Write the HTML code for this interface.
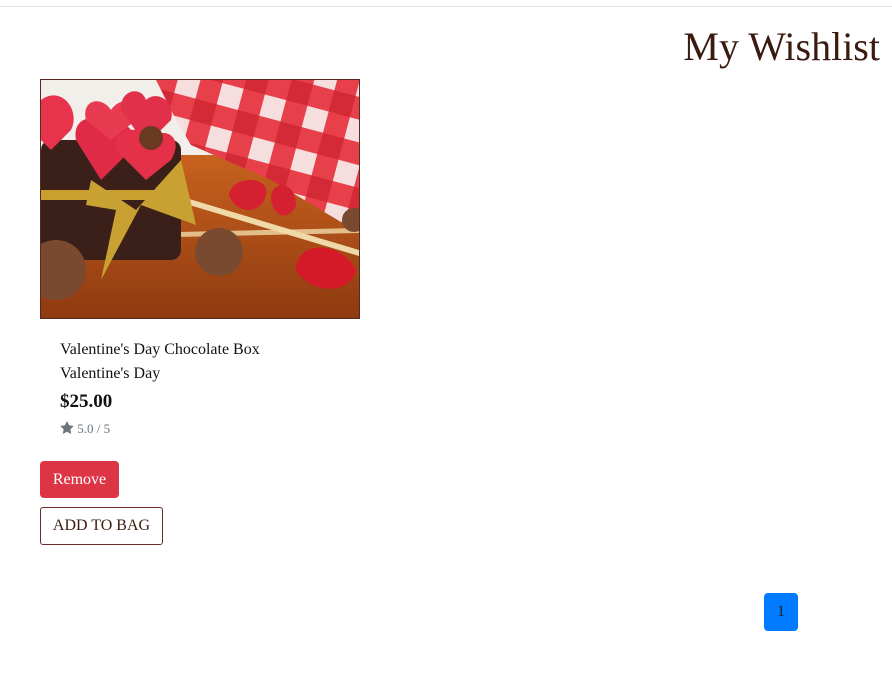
<!DOCTYPE html>
<html><head><meta charset="utf-8"><style>
body{margin:0;width:892px;height:682px;background:#fff;font-family:"Liberation Serif",serif;position:relative;overflow:hidden}
.line{position:absolute;left:0;top:6px;width:892px;height:1px;background:#e3e3e3}
h1{position:absolute;right:12px;top:24px;margin:0;font-weight:normal;font-size:40px;line-height:46px;color:#3b1a0f}
.img{position:absolute;left:40px;top:79px;width:318px;height:238px;border:1px solid #5a2a20;overflow:hidden}
.t{position:absolute;left:60px;color:#111;font-size:16px}
.btn1{position:absolute;left:40px;top:461px;width:79px;height:37px;background:#dc3545;border-radius:4px;color:#fff;font-size:16px;text-align:center;line-height:37px}
.btn2{position:absolute;left:40px;top:507px;width:121px;height:36px;border:1px solid #6b2d25;border-radius:3px;color:#3b1a0f;font-size:16px;text-align:center;line-height:36px}
.pg{position:absolute;left:764px;top:593px;width:34px;height:38px;background:#007bff;border-radius:4px;color:#222;font-size:16px;text-align:center;line-height:38px}
</style></head><body>
<div class="line"></div>
<h1>My Wishlist</h1>
<div class="img"><svg width="318" height="238" viewBox="0 0 318 238">
<defs><linearGradient id="w" x1="0" y1="0" x2="0" y2="1"><stop offset="0" stop-color="#c8621e"/><stop offset="1" stop-color="#8e3a10"/></linearGradient>
<pattern id="ck" width="44" height="44" patternUnits="userSpaceOnUse" patternTransform="rotate(15)"><rect width="44" height="44" fill="#e8404a"/><rect width="22" height="22" fill="#f6dede"/><rect x="22" y="22" width="22" height="22" fill="#d42a36"/></pattern></defs>
<rect width="318" height="238" fill="#f2eeea"/>
<rect y="75" width="318" height="163" fill="url(#w)"/>
<polygon points="135,115 318,170 318,176 135,121" fill="#f0d9a8"/>
<polygon points="0,155 318,148 318,153 0,160" fill="#f0d9a8" opacity=".8"/>
<polygon points="115,0 318,0 318,135 300,142 230,100 150,65 135,40" fill="url(#ck)"/>
<rect x="0" y="60" width="140" height="120" rx="10" fill="#3a2018"/>
<rect x="0" y="110" width="140" height="10" fill="#c9a030"/>
<path d="M0,20 C20,5 40,30 30,50 L10,70 0,60Z" fill="#e8334d"/>
<path d="M35,60 C30,35 60,30 65,55 C75,35 100,45 90,70 L60,100 Z" fill="#e02a48"/>
<path d="M45,40 C40,20 60,15 70,30 C80,15 100,20 95,40 L70,60Z" fill="#e83a50"/>
<path d="M80,30 C78,10 100,5 105,20 C115,10 135,20 130,40 L105,65Z" fill="#e0304a"/>
<path d="M75,70 C70,45 105,45 110,60 C120,45 145,55 130,80 L105,100 Z" fill="#e43048"/>
<circle cx="110" cy="58" r="12" fill="#6b3a22"/>
<path d="M50,100 L95,130 L140,80 L155,145 L100,125 L60,200 L75,130 L45,125Z" fill="#c9a032"/>
<circle cx="178" cy="172" r="24" fill="#7a4a30"/>
<circle cx="15" cy="190" r="30" fill="#7a4a30"/>
<circle cx="313" cy="140" r="12" fill="#7a4a30"/>
<path d="M188,115 C190,95 230,95 225,115 C220,135 195,135 188,115Z" fill="#d42030"/>
<path d="M230,118 C230,100 255,100 255,125 C250,140 232,140 230,118Z" fill="#d42030"/>
<path d="M255,190 C255,160 300,160 315,190 C310,215 270,215 255,190Z" fill="#d41a28"/>
</svg></div>
<div class="t" style="top:341px">Valentine's Day Chocolate Box</div>
<div class="t" style="top:365px">Valentine's Day</div>
<div class="t" style="top:391px;font-size:19px;font-weight:bold">$25.00</div>
<div class="t" style="top:421px;font-size:13px;color:#6c757d"><svg width="14" height="13" viewBox="0 0 24 23" style="vertical-align:-1px"><path d="M12 0l3.7 7.6 8.3 1.2-6 5.8 1.4 8.3L12 19l-7.4 3.9L6 14.6 0 8.8l8.3-1.2z" fill="#6c757d"/></svg> 5.0 / 5</div>
<div class="btn1">Remove</div>
<div class="btn2">ADD TO BAG</div>
<div class="pg">1</div>
</body></html>
